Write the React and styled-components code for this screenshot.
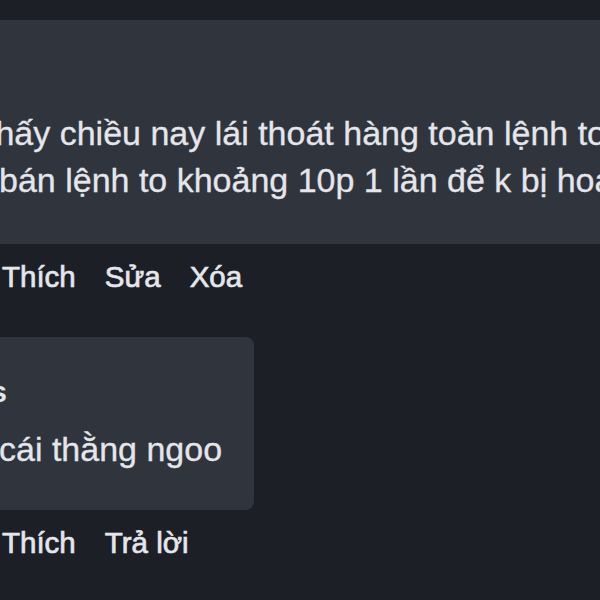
import React from "react";
import styled, { createGlobalStyle } from "styled-components";

const Global = createGlobalStyle`
  html, body {
    margin: 0;
    padding: 0;
    background: #1c1f26;
  }
  body {
    font-family: "Liberation Sans", Arial, sans-serif;
  }
`;

const Page = styled.div`
  width: 600px;
  height: 600px;
  overflow: hidden;
  background: #1c1f26;
  padding-top: 20px;
  box-sizing: border-box;
`;

const Thread = styled.div`
  display: flex;
  flex-direction: column;
  align-items: flex-start;
  margin-left: -41px;
`;

const Bubble = styled.div`
  background: #30343c;
  border-radius: 8px;
  padding: ${(p) => p.$pad};
  width: ${(p) => p.$width || "auto"};
  box-sizing: border-box;
  color: #e4e6eb;
`;

const Name = styled.div`
  font-weight: 700;
  font-size: 30px;
  line-height: 36px;
  white-space: nowrap;
  text-indent: ${(p) => p.$indent || 0}px;
  margin-bottom: 16px;
`;

const Line = styled.div`
  font-size: 34px;
  line-height: 47px;
  white-space: nowrap;
  text-indent: ${(p) => p.$indent || 0}px;
  -webkit-text-stroke: 0.3px #e4e6eb;
`;

const Actions = styled.div`
  display: flex;
  gap: 29px;
  padding-left: 43px;
  margin-top: 17px;
  margin-bottom: ${(p) => p.$after || 0}px;
`;

const Action = styled.span`
  font-size: 29.5px;
  line-height: 32px;
  font-weight: 400;
  color: #e4e6eb;
  white-space: nowrap;
  -webkit-text-stroke: 0.7px #e4e6eb;
`;

export default function App() {
  return (
    <>
      <Global />
      <Page>
        <Thread>
          <Bubble $pad="90px 40px 40px 40px" $width="900px">
            <Line $indent={-13}>thấy chiều nay lái thoát hàng toàn lệnh to</Line>
            <Line>bán lệnh to khoảng 10p 1 lần để k bị hoang mang</Line>
          </Bubble>
          <Actions $after={44}>
            <Action>Thích</Action>
            <Action>Sửa</Action>
            <Action>Xóa</Action>
          </Actions>
          <Bubble $pad="37px 32px 37px 40px">
            <Name $indent={-107}>Thomas</Name>
            <Line>cái thằng ngoo</Line>
          </Bubble>
          <Actions>
            <Action>Thích</Action>
            <Action>Trả lời</Action>
          </Actions>
        </Thread>
      </Page>
    </>
  );
}
